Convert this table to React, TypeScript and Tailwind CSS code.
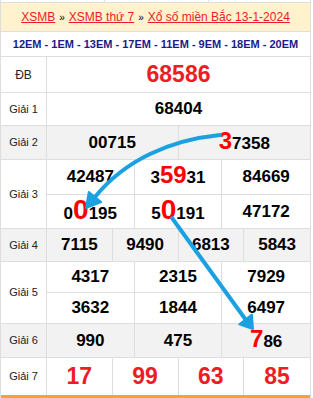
import React from 'react'

const font = { fontFamily: '"Liberation Sans", Arial, sans-serif' }

type Cell = React.ReactNode

function Label({ text }: { text: string }) {
	return (
		<div className="w-[46px] shrink-0 flex items-center justify-center border-r border-[#dedede] text-[11px] text-[#222]">
			{text}
		</div>
	)
}

function Line({ cells, cols, last }: { cells: Cell[]; cols: number; last?: boolean }) {
	const grid = cols === 2 ? 'grid-cols-2' : cols === 3 ? 'grid-cols-3' : cols === 4 ? 'grid-cols-4' : 'grid-cols-1'
	return (
		<div className={`grid ${grid} flex-1 ${last ? '' : 'border-b border-[#dedede]'}`}>
			{cells.map((c, i) => (
				<div
					key={i}
					className={`flex items-center justify-center text-[17px] font-bold text-black ${i < cells.length - 1 ? 'border-r border-[#dedede]' : ''}`}
				>
					{c}
				</div>
			))}
		</div>
	)
}

function Red({ children, big }: { children: React.ReactNode; big?: boolean }) {
	return <span className={`${big ? 'text-[28px]' : 'text-[24px]'} text-[#ff0000] leading-none`}>{children}</span>
}

export default function App() {
	return (
		<div className="relative w-[313px] h-[398px] bg-white overflow-hidden" style={font}>
			<div className="w-[311px] border-x border-[#dedede]">
				{/* tail of previous table */}
				<div className="h-[3px] flex border-b border-[#dedede]">
					<div className="w-[104px] border-r border-[#dedede]" />
					<div className="w-[104px] border-r border-[#dedede]" />
					<div className="flex-1" />
				</div>

				<div className="h-[29px] bg-[#fff2cc] flex items-center justify-center gap-[4px] text-[12px] border-b border-[#dedede]">
					<a className="text-[#ee1c25] underline" href="#">XSMB</a>
					<span className="text-[10px] text-black">»</span>
					<a className="text-[#ee1c25] underline" href="#">XSMB thứ 7</a>
					<span className="text-[10px] text-black">»</span>
					<a className="text-[#ee1c25] underline" href="#">Xổ số miền Bắc 13-1-2024</a>
				</div>

				<div className="h-[25px] flex items-center justify-center text-[11px] font-bold text-[#1a1a8c] border-b border-[#dedede]">
					12EM - 1EM - 13EM - 17EM - 11EM - 9EM - 18EM - 20EM
				</div>

				{/* ĐB */}
				<div className="h-[36px] flex border-b border-[#dedede]">
					<div className="w-[46px] shrink-0 flex items-center justify-center border-r border-[#dedede] text-[12px] text-[#222]">ĐB</div>
					<div className="flex-1 flex items-center justify-center text-[23px] font-bold text-[#ee1c25]">68586</div>
				</div>

				{/* Giải 1 */}
				<div className="h-[33px] flex border-b border-[#dedede]">
					<Label text="Giải 1" />
					<Line cols={1} cells={['68404']} last />
				</div>

				{/* Giải 2 */}
				<div className="h-[34px] flex bg-[#f2f2f2] border-b border-[#dedede]">
					<Label text="Giải 2" />
					<Line cols={2} last cells={['00715', <span key="a"><Red>3</Red>7358</span>]} />
				</div>

				{/* Giải 3 */}
				<div className="h-[69px] flex border-b border-[#dedede]">
					<Label text="Giải 3" />
					<div className="flex-1 flex flex-col">
						<Line cols={3} cells={['42487', <span key="b">3<Red>59</Red>31</span>, '84669']} />
						<Line cols={3} last cells={[<span key="c">0<Red big>0</Red>195</span>, <span key="d">5<Red big>0</Red>191</span>, '47172']} />
					</div>
				</div>

				{/* Giải 4 */}
				<div className="h-[33px] flex bg-[#f2f2f2] border-b border-[#dedede]">
					<Label text="Giải 4" />
					<Line cols={4} last cells={['7115', '9490', '6813', '5843']} />
				</div>

				{/* Giải 5 */}
				<div className="h-[62px] flex border-b border-[#dedede]">
					<Label text="Giải 5" />
					<div className="flex-1 flex flex-col">
						<Line cols={3} cells={['4317', '2315', '7929']} />
						<Line cols={3} last cells={['3632', '1844', '6497']} />
					</div>
				</div>

				{/* Giải 6 */}
				<div className="h-[34px] flex bg-[#f2f2f2] border-b border-[#dedede]">
					<Label text="Giải 6" />
					<Line cols={3} last cells={['990', '475', <span key="e"><Red>7</Red>86</span>]} />
				</div>

				{/* Giải 7 */}
				<div className="h-[37px] flex">
					<Label text="Giải 7" />
					<div className="grid grid-cols-4 flex-1">
						{['17', '99', '63', '85'].map((n, i) => (
							<div key={n} className={`flex items-center justify-center text-[23px] font-bold text-[#ee1c25] ${i < 3 ? 'border-r border-[#dedede]' : ''}`}>
								{n}
							</div>
						))}
					</div>
				</div>
				<div className="h-[3px] bg-[#f7a035]" />
			</div>

			{/* hand-drawn arrows */}
			<svg className="absolute top-0 left-0 pointer-events-none" width="313" height="398" viewBox="0 0 313 398">
				<path d="M220 135 C 170 140, 125 160, 95 197" fill="none" stroke="#1ba1e2" strokeWidth="4" strokeLinecap="round" />
				<polygon points="86,208 88.8,192 101.2,202" fill="#1ba1e2" stroke="#1ba1e2" strokeWidth="2" strokeLinejoin="round" />
				<path d="M172 218 L245.6 319.5" fill="none" stroke="#1ba1e2" strokeWidth="4" strokeLinecap="round" />
				<polygon points="253,329 251.9,314.6 239.3,324.4" fill="#1ba1e2" stroke="#1ba1e2" strokeWidth="2" strokeLinejoin="round" />
			</svg>
		</div>
	)
}
